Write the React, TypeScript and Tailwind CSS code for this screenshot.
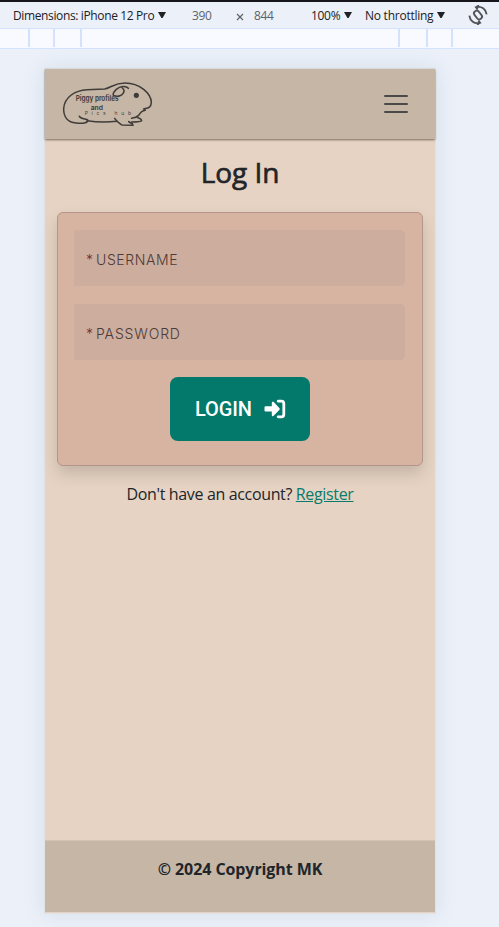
import React from "react";

const UI = "font-['Open_Sans','Noto_Sans',sans-serif]";

function Caret() {
  return (
    <svg width="8" height="6" viewBox="0 0 8 6" className="shrink-0">
      <path d="M0 0h8L4.6 6H3.4z" fill="#202124" />
    </svg>
  );
}

function RotateIcon() {
  return (
    <svg width="20" height="20" viewBox="0 0 60 60" fill="none" stroke="#505357" strokeWidth="5.6">
      <rect x="22" y="16" width="16" height="28" rx="7" transform="rotate(-38 30 30)" />
      <path d="M29 13L24 7C41 2 54 13 56 28" />
      <path d="M24 7l9-6" />
      <path d="M31 47L36 53C19 58 6 47 4 32" />
      <path d="M36 53l-9 6" />
    </svg>
  );
}

function Toolbar() {
  return (
    <div className={`${UI} flex h-[29px] items-center border-b border-t-2 border-b-[#d3e3fd] border-t-[#16161c] bg-[#ecf0f9] pl-[13px] text-[12px] text-[#202124]`}>
      <div className="flex w-[179px] items-center gap-[4px] whitespace-nowrap">
        <span className="pt-[2px] tracking-[-0.37px]">Dimensions: iPhone 12 Pro</span>
        <Caret />
      </div>
      <span className="w-[43px] pt-[2px] tracking-[-0.4px] text-[#5f6368]">390</span>
      <svg width="8" height="8" viewBox="0 0 8 8" className="ml-[1px] mt-[4px]" stroke="#5f6368" strokeWidth="1.2">
        <path d="M1 1l6 6M7 1L1 7" />
      </svg>
      <span className="ml-[10px] w-[57px] pt-[2px] tracking-[-0.4px] text-[#5f6368]">844</span>
      <div className="flex w-[54px] items-center gap-[4px]">
        <span className="pt-[2px] tracking-[-0.3px]">100%</span>
        <Caret />
      </div>
      <div className="flex w-[103px] items-center gap-[4px] whitespace-nowrap">
        <span className="pt-[2px] tracking-[-0.25px]">No throttling</span>
        <Caret />
      </div>
      <RotateIcon />
    </div>
  );
}

function Ruler() {
  return (
    <div className="flex h-5 border-b border-[#d3e3fd] bg-[#f8faff] pb-[1px]">
      <div className="w-[30px] border-r-2 border-[#d3e3fd]" />
      <div className="w-[25px] border-r-2 border-[#d3e3fd]" />
      <div className="w-[27px] border-r-2 border-[#d3e3fd]" />
      <div className="w-[318px] border-r-2 border-[#d3e3fd]" />
      <div className="w-[28px] border-r-2 border-[#d3e3fd]" />
      <div className="w-[25px] border-r-2 border-[#d3e3fd]" />
    </div>
  );
}

function Logo() {
  return (
    <svg width="95" height="48" viewBox="60 45 285 144" fill="none" stroke="#3f3c3a" strokeWidth="4.6" strokeLinecap="round" strokeLinejoin="round">
      <path d="M118 154C121 163 134 159 143 165C144 175 128 176 108 174C84 172 70 156 71 130C74 96 105 76 141 74L194 72C214 68 222 54 255 54C300 54 333 86 334 112C333 130 322 129 311 132L316 136C305 137 301 143 296 151C290 157 282 159 275 160" />
      <path d="M142 167C170 172 202 172 231 169" />
      <path d="M224 160C230 170 238 174 246 180L279 181C280 174 271 175 266 170M275 171C287 171 303 171 305 167C304 160 298 161 292 157" />
      <path d="M265 70C258 61 240 63 229 73C221 80 217 88 221 91C230 96 244 94 249 86C254 79 252 73 247 69" />
      <circle cx="289" cy="91" r="5.5" fill="#3f3c3a" />
      <g stroke="none" fill="#474240" className="font-['Inter',sans-serif]">
        <text x="107" y="107" fontSize="22" fontWeight="700" textLength="129" lengthAdjust="spacingAndGlyphs">Piggy profiles</text>
        <text x="152" y="136" fontSize="20" fontWeight="700" textLength="37" lengthAdjust="spacingAndGlyphs">and</text>
        <text x="134" y="150" fontSize="15" textLength="139">Pics hub</text>
      </g>
    </svg>
  );
}

function Field({ label, spacing }: { label: string; spacing: string }) {
  return (
    <div className="flex h-14 w-[331px] items-center rounded-r-[5px] bg-[#cdad9e] pl-3 pt-[3px] font-['Inter',sans-serif] text-[14px] font-light text-[#4c3b39]">
      <span className="mr-[3px] text-[#792f38]">*</span>
      <span className={spacing}>{label}</span>
    </div>
  );
}

export default function App() {
  return (
    <div className="flex h-[927px] w-[499px] flex-col overflow-hidden bg-[#ebf0f9]">
      <Toolbar />
      <Ruler />
      <div className={`${UI} ml-[45px] mt-5 flex h-[844px] w-[390px] shrink-0 flex-col bg-[#e6d3c3] text-[#212529] shadow-[0_0_0_1px_#dfe2e6,0_0_20px_rgba(110,140,140,0.18)]`}>
        <header className="z-10 flex h-[70px] shrink-0 items-center justify-between bg-[#c6b6a6] pl-[15px] pr-[27px] shadow-[0_1px_2px_rgba(70,50,35,0.65)]">
          <Logo />
          <button aria-label="Menu" className="flex flex-col gap-[6px]">
            <span className="h-[2px] w-6 rounded-full bg-[#4b4a49]" />
            <span className="h-[2px] w-6 rounded-full bg-[#4b4a49]" />
            <span className="h-[2px] w-6 rounded-full bg-[#4b4a49]" />
          </button>
        </header>
        <main className="flex flex-1 flex-col items-center">
          <h1 className="mt-[16px] h-[57px] text-[28px] font-medium leading-[34px] tracking-[-0.05px] [-webkit-text-stroke:0.65px_#212529]">Log In</h1>
          <form className="flex h-[254px] w-[366px] flex-col items-start rounded-[6px] border border-[#b4958a] bg-[#d7b3a1] pl-4 pt-[17px] shadow-[0_8px_16px_rgba(0,0,0,0.15)]">
            <Field label="USERNAME" spacing="tracking-[0.6px]" />
            <div className="h-[18px]" />
            <Field label="PASSWORD" spacing="tracking-[0.85px]" />
            <button type="button" className="ml-[96px] mt-[17px] flex h-16 w-[140px] items-center rounded-[8px] bg-[#02796b] pl-[25px] font-['Roboto',sans-serif] text-[20px] font-medium text-white">
              <span className="w-[69px] text-left tracking-[-0.1px]">LOGIN</span>
              <svg width="22" height="20" viewBox="0 0 22 20" fill="none">
                <path d="M1.8 7.2h6V3.9c0-1.3 1-1.6 1.9-.8l5.6 5.8c.6.7.6 1.3 0 2l-5.6 5.8c-.9.8-1.9.5-1.9-.8v-3.4h-6C1 12.5.5 12 .5 11.2V8.5c0-.8.5-1.3 1.3-1.3z" fill="white" />
                <path d="M14.2 2.2h3.2c1.4 0 2.4 1 2.4 2.4v10.8c0 1.4-1 2.4-2.4 2.4h-3.2" stroke="white" strokeWidth="2.8" strokeLinecap="round" />
              </svg>
            </button>
          </form>
          <p className="mt-[16px] whitespace-nowrap text-[16px] leading-6 tracking-[-0.35px]">
            Don't have an account? <a className="text-[#087b6c] underline">Register</a>
          </p>
        </main>
        <footer className="mb-[1px] flex h-[72px] shrink-0 justify-center border-t border-[#d5c1b0] bg-[#c6b6a6] pt-[16px] text-[16px] font-bold leading-6 tracking-[-0.08px]">
          <span>© 2024 Copyright MK</span>
        </footer>
      </div>
    </div>
  );
}
